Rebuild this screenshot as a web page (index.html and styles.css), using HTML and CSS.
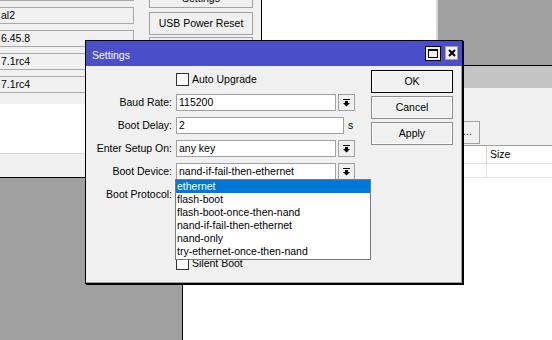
FILE: index.html
```html
<!DOCTYPE html>
<html>
<head>
<meta charset="utf-8">
<link rel="stylesheet" href="styles.css">
</head>
<body>
<div class="desk">
  <div class="win-a">
    <div class="a-top">
      <div class="a-fields">
        <div class="a-field"></div>
        <div class="a-field">al2</div>
        <div class="a-field">6.45.8</div>
        <div class="a-field">7.1rc4</div>
        <div class="a-field">7.1rc4</div>
      </div>
      <div class="a-btns">
        <div class="a-btn a-first">Settings</div>
        <div class="a-btn">USB Power Reset</div>
        <div class="a-btn">Reboot</div>
      </div>
    </div>
    <div class="a-white"></div>
    <div class="a-strip"></div>
  </div>

  <div class="win-b"></div>

  <div class="win-c">
    <div class="c-title"></div>
    <div class="c-tools"><div class="c-dots">...</div></div>
    <div class="c-table">
      <div class="c-head"><div class="c-col1"></div><div class="c-col2">Size</div></div>
      <div class="c-row"><div class="c-col1"></div><div class="c-col2"></div></div>
    </div>
  </div>

  <div class="dlg">
    <div class="dlg-title">
      <span class="dlg-name">Settings</span>
      <span class="tb tb-max"><svg width="10" height="9" viewBox="0 0 10 9"><rect x="0.5" y="0.5" width="9" height="8" fill="none" stroke="#000"/><rect x="0" y="0" width="10" height="2" fill="#000"/></svg></span>
      <span class="tb tb-close"><svg width="8" height="8" viewBox="0 0 8 8"><path d="M1 1L7 7M7 1L1 7" stroke="#000" stroke-width="2"/></svg></span>
    </div>
    <div class="dlg-body">
      <div class="form">
        <span></span>
        <div class="ctl"><span class="box"></span><span class="cap">Auto Upgrade</span></div>

        <span class="lbl">Baud Rate:</span>
        <div class="ctl"><span class="fld w160">115200</span><span class="arr"><svg width="7" height="8" viewBox="0 0 7 8"><rect x="0" y="0" width="7" height="1" fill="#000"/><rect x="2" y="2" width="3" height="2" fill="#000"/><path d="M0 4H7L3.5 7.5Z" fill="#000"/></svg></span></div>

        <span class="lbl">Boot Delay:</span>
        <div class="ctl"><span class="fld w168">2</span><span class="unit">s</span></div>

        <span class="lbl">Enter Setup On:</span>
        <div class="ctl"><span class="fld w160">any key</span><span class="arr"><svg width="7" height="8" viewBox="0 0 7 8"><rect x="0" y="0" width="7" height="1" fill="#000"/><rect x="2" y="2" width="3" height="2" fill="#000"/><path d="M0 4H7L3.5 7.5Z" fill="#000"/></svg></span></div>

        <span class="lbl">Boot Device:</span>
        <div class="ctl"><span class="fld w160">nand-if-fail-then-ethernet</span><span class="arr"><svg width="7" height="8" viewBox="0 0 7 8"><rect x="0" y="0" width="7" height="1" fill="#000"/><rect x="2" y="2" width="3" height="2" fill="#000"/><path d="M0 4H7L3.5 7.5Z" fill="#000"/></svg></span>
          <div class="list">
            <div class="opt sel">ethernet</div>
            <div class="opt">flash-boot</div>
            <div class="opt">flash-boot-once-then-nand</div>
            <div class="opt">nand-if-fail-then-ethernet</div>
            <div class="opt">nand-only</div>
            <div class="opt">try-ethernet-once-then-nand</div>
          </div>
        </div>

        <span class="lbl">Boot Protocol:</span>
        <div class="ctl"><span class="fld w160"></span><span class="arr"></span></div>

        <span></span><span></span>
        <span></span><span></span>

        <span></span>
        <div class="ctl"><span class="box"></span><span class="cap">Silent Boot</span></div>
      </div>
      <div class="btns">
        <button class="btn def">OK</button>
        <button class="btn">Cancel</button>
        <button class="btn">Apply</button>
      </div>
    </div>
  </div>
</div>
</body>
</html>
```

FILE: styles.css
```css
* { box-sizing: border-box; }
body {
  margin: 0;
  font-family: "Liberation Sans", Arial, sans-serif;
  font-size: 10.5px;
  color: #000;
}
.desk {
  position: relative;
  width: 552px;
  height: 340px;
  overflow: hidden;
  background: #a0a0a0;
}

/* left background window */
.win-a {
  position: absolute;
  left: -3px;
  top: -20px;
  width: 265px;
  height: 198px;
  border-right: 1px solid #000;
  border-bottom: 1px solid #000;
  background: #f0f0f0;
  display: flex;
  flex-direction: column;
}
.a-top {
  height: 124px;
  display: flex;
  gap: 15px;
  padding: 4px 0 0 1px;
}
.a-fields {
  width: 136px;
  display: flex;
  flex-direction: column;
  gap: 6px;
}
.a-field {
  height: 17px;
  border: 1px solid #a8a8a8;
  padding-left: 2px;
  line-height: 15px;
  white-space: nowrap;
  overflow: hidden;
}
.a-btns {
  width: 104px;
  display: flex;
  flex-direction: column;
  gap: 2px;
  padding-top: 1px;
}
.a-btn {
  height: 23px;
  border: 1px solid #a0a0a0;
  background: #f0f0f0;
  text-align: center;
  line-height: 21px;
  white-space: nowrap;
}
.a-first { margin-bottom: 2px; line-height: 25px; }
.a-white { height: 49px; background: #fff; }
.a-strip { height: 24px; border-top: 1px solid #d6d6d6; background: #f0f0f0; }

/* middle background window */
.win-b {
  position: absolute;
  left: 262px;
  top: -10px;
  width: 176px;
  height: 120px;
  background: #fff;
  border-right: 2px solid #d8d8d8;
}

/* right background window */
.win-c {
  position: absolute;
  left: 182px;
  top: 65px;
  width: 380px;
  height: 290px;
  border-top: 1px solid #000;
  border-left: 1px solid #000;
  background: #f0f0f0;
  display: flex;
  flex-direction: column;
}
.c-title { height: 22px; background: #c4c4c4; flex: none; }
.c-tools { height: 57px; flex: none; padding: 33px 0 0 272px; }
.c-dots {
  width: 25px;
  height: 23px;
  border: 1px solid #a0a0a0;
  background: #f0f0f0;
  text-align: center;
  line-height: 19px;
  color: #202060;
}
.c-table {
  flex: 1;
  background: #fff;
  padding-left: 4px;
}
.c-head, .c-row {
  display: flex;
  border-left: 1px solid #a0a0a0;
}
.c-head {
  height: 19px;
  border-top: 1px solid #a0a0a0;
  border-bottom: 1px solid #dcdcdc;
  line-height: 17px;
}
.c-row {
  height: 14px;
  border-bottom: 1px solid #e3e3e3;
}
.c-col1 { width: 299px; border-right: 1px solid #d0d0d0; }
.c-row .c-col1 { border-right-color: #e3e3e3; }
.c-col2 { flex: 1; padding-left: 3px; }

/* Settings dialog */
.dlg {
  position: absolute;
  left: 85px;
  top: 40px;
  width: 378px;
  height: 244px;
  border: 1px solid #000;
  background: #f0f0f0;
  box-shadow: inset -1px -1px 0 #a0a0a0, 1px 1px 0 #000;
}
.dlg-title {
  height: 25px;
  background: #4a4ec8;
  display: flex;
  align-items: flex-start;
  padding-right: 4px;
}
.dlg-name {
  color: #fff;
  padding-left: 6px;
  margin-top: 6px;
  line-height: 17px;
}
.tb {
  margin-top: 5px;
  display: flex;
  align-items: center;
  justify-content: center;
  background: #f0f0f0;
}
.tb-max {
  margin-left: auto;
  width: 16px;
  height: 15px;
  border: 1px solid #000;
}
.tb-close {
  margin-left: 4px;
  width: 13px;
  height: 14px;
  border: 1px solid #a0a0a0;
}
.dlg-body {
  display: flex;
  gap: 7px;
  padding-top: 4px;
}
.form {
  width: 278px;
  margin-top: 1px;
  display: grid;
  grid-template-columns: 86px 188px;
  grid-auto-rows: 17px;
  column-gap: 4px;
  row-gap: 6px;
}
.lbl {
  text-align: right;
  line-height: 17px;
  white-space: nowrap;
}
.ctl {
  position: relative;
  display: flex;
  align-items: center;
  gap: 2px;
  white-space: nowrap;
}
.fld {
  height: 17px;
  border: 1px solid #a0a0a0;
  background: #fff;
  line-height: 15px;
  padding-left: 2px;
  overflow: hidden;
}
.w160 { width: 160px; }
.w168 { width: 168px; }
.unit { margin-left: 2px; line-height: 17px; }
.arr {
  width: 17px;
  height: 17px;
  border: 1px solid #a0a0a0;
  background: #f0f0f0;
  display: flex;
  align-items: center;
  justify-content: center;
}
.box {
  width: 13px;
  height: 13px;
  border: 1px solid #333;
  background: #fff;
}
.cap { margin-left: 1px; line-height: 17px; }
.list {
  position: absolute;
  left: -1px;
  top: 16px;
  width: 196px;
  border: 1px solid #7a7a7a;
  background: #fff;
  padding-bottom: 1px;
  z-index: 5;
}
.opt {
  height: 13px;
  line-height: 13px;
  padding-left: 1px;
  white-space: nowrap;
}
.opt.sel { background: #0078d7; color: #fff; }
.btns {
  display: flex;
  flex-direction: column;
  gap: 3px;
}
.btn {
  width: 82px;
  height: 23px;
  padding: 0;
  font: inherit;
  color: #000;
  line-height: 21px;
  background: #f0f0f0;
  border: 1px solid #8d8d8d;
  box-shadow: inset 0 0 0 1px #fafafa;
}
.btn.def { border-color: #000; }
```
